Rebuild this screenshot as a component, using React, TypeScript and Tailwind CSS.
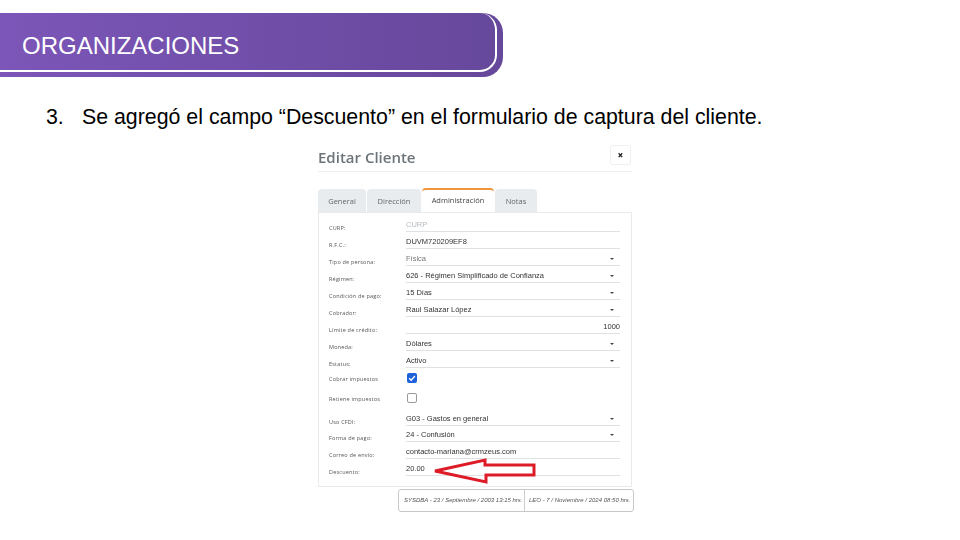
const rows = [
  { label: "CURP:", value: "CURP", kind: "placeholder", h: "h-[17px]" },
  { label: "R.F.C.:", value: "DUVM720209EF8", kind: "text", h: "h-[17px]" },
  { label: "Tipo de persona:", value: "Física", kind: "muted-select", h: "h-[17px]" },
  { label: "Régimen:", value: "626 - Régimen Simplificado de Confianza", kind: "select", h: "h-[17px]" },
  { label: "Condición de pago:", value: "15 Días", kind: "select", h: "h-[17px]" },
  { label: "Cobrador:", value: "Raul Salazar López", kind: "select", h: "h-[17px]" },
  { label: "Límite de crédito:", value: "1000", kind: "number", h: "h-[17px]" },
  { label: "Moneda:", value: "Dólares", kind: "select", h: "h-[17px]" },
  { label: "Estatus:", value: "Activo", kind: "select", h: "h-[17px]" },
];

const rowsBottom = [
  { label: "Uso CFDI:", value: "G03 - Gastos en general", kind: "select", h: "h-[17px]" },
  { label: "Forma de pago:", value: "24 - Confusión", kind: "select", h: "h-[16px]" },
  { label: "Correo de envío:", value: "contacto-mariana@crmzeus.com", kind: "text", h: "h-[17px]" },
  { label: "Descuento:", value: "20.00", kind: "text", h: "h-[17px]" },
];

type RowData = { label: string; value: string; kind: string; h: string };

function Row({ row }: { row: RowData }) {
  const isSelect = row.kind === "select" || row.kind === "muted-select";
  const color =
    row.kind === "placeholder"
      ? "text-[#b5b9bd]"
      : row.kind === "muted-select"
        ? "text-[#777]"
        : "text-[#333]";
  return (
    <div className={`flex items-center ${row.h}`}>
      <div className="w-[77px] pt-[10px] text-[5.5px] tracking-[0.2px] text-[#555]">{row.label}</div>
      <div className={`flex h-full flex-1 items-center justify-between border-b border-[#dfe2e5] pt-[4px] text-[7.5px] ${color} ${row.kind === "number" ? "justify-end" : ""}`}>
        <span className="font-['Liberation_Sans',sans-serif]">{row.value}</span>
        {isSelect && <span className="mr-[6px] h-0 w-0 border-x-[2px] border-t-[2.5px] border-x-transparent border-t-[#444]" />}
      </div>
    </div>
  );
}

function CheckRow({ label, checked, h }: { label: string; checked: boolean; h: string }) {
  return (
    <div className={`flex items-center ${h}`}>
      <div className="w-[77px] pt-[3px] text-[5.5px] tracking-[0.2px] text-[#555]">{label}</div>
      <div className="pl-[1px]">
        {checked ? (
          <div className="flex h-[10px] w-[10px] items-center justify-center rounded-[2px] bg-[#1d62d8]">
            <svg viewBox="0 0 10 10" className="h-[10px] w-[10px]">
              <path d="M2.2 5.2 L4.2 7.2 L7.9 3" fill="none" stroke="#fff" strokeWidth="1.4" />
            </svg>
          </div>
        ) : (
          <div className="h-[10px] w-[10px] rounded-[2px] border border-[#9a9a9a] bg-white" />
        )}
      </div>
    </div>
  );
}

export default function App() {
  return (
    <div className="relative h-[540px] w-[960px] overflow-hidden bg-white font-['Liberation_Sans',sans-serif]">
      <div className="pt-[13px]">
        <div className="h-[64px] w-[503px] rounded-r-[20px] bg-gradient-to-r from-[#7c56b8] to-[#66489b]">
          <div className="flex h-[59px] w-[497px] items-center rounded-r-[17px] border-r-2 border-b-2 border-white pl-[22px] text-[24px] text-white">
            <span className="pt-[9px]">ORGANIZACIONES</span>
          </div>
        </div>
      </div>

      <div className="mt-[28px] flex pl-[46px] text-[21.33px] leading-[24px] text-black">
        <span className="w-[36px]">3.</span>
        <span>Se agregó el campo “Descuento” en el formulario de captura del cliente.</span>
      </div>

      <div className="ml-[318px] mt-[17px] w-[314px] font-['Open_Sans',sans-serif] blur-[0.35px]">
        <div className="flex items-center justify-between border-b border-[#eee] pb-[2px] pr-[1px]">
          <span className="text-[15px] font-semibold text-[#6c7479]">Editar Cliente</span>
          <span className="-mt-[4px] flex h-[20px] w-[21px] items-center justify-center rounded-[2px] border border-[#f0f0f0] text-[10px] font-extrabold text-[#222]">×</span>
        </div>
        <div className="mt-[16px] flex items-end text-[7.5px] text-[#666]">
          <div className="flex h-[23px] w-[48px] items-center justify-center rounded-t-[4px] bg-[#e9ecee] pt-[3px]">General</div>
          <div className="ml-[1px] flex h-[23px] w-[54px] items-center justify-center rounded-t-[4px] bg-[#e9ecee] pt-[3px]">Dirección</div>
          <div className="ml-[1px] flex h-[24px] w-[72px] items-center justify-center rounded-t-[4px] border-t-2 border-[#f0953a] bg-white text-[#444]">Administración</div>
          <div className="ml-[1px] flex h-[23px] w-[42px] items-center justify-center rounded-t-[4px] bg-[#e9ecee] pt-[3px]">Notas</div>
        </div>
        <div className="border border-[#e8eaec] pb-[10px] pl-[10px] pr-[11px] pt-[2px]">
          {rows.map((r) => (
            <Row key={r.label} row={r} />
          ))}
          <CheckRow label="Cobrar impuestos" checked h="h-[20px]" />
          <CheckRow label="Retiene impuestos" checked={false} h="h-[21px]" />
          {rowsBottom.map((r) => (
            <Row key={r.label} row={r} />
          ))}
        </div>
      </div>

      <div className="ml-[398px] mt-[2px] flex h-[23px] w-[236px] items-center whitespace-nowrap rounded-[3px] border border-[#c8c8c8] text-[6px] italic text-[#555] blur-[0.3px]">
        <span className="w-[125px] pl-[5px]">SYSDBA - 23 / Septiembre / 2003 13:15 hrs.</span>
        <span className="flex h-full items-center border-l border-[#ccc] pl-[4px]">LEO - 7 / Noviembre / 2024 08:50 hrs.</span>
      </div>

      <svg className="absolute left-[430px] top-[455px]" width="110" height="32" viewBox="0 0 110 32">
        <path d="M5 16 L55 5 L55 10 L104 10 L104 20 L56 20 L56 27 Z" fill="none" stroke="#dd1c28" strokeWidth="3" />
      </svg>
    </div>
  );
}
